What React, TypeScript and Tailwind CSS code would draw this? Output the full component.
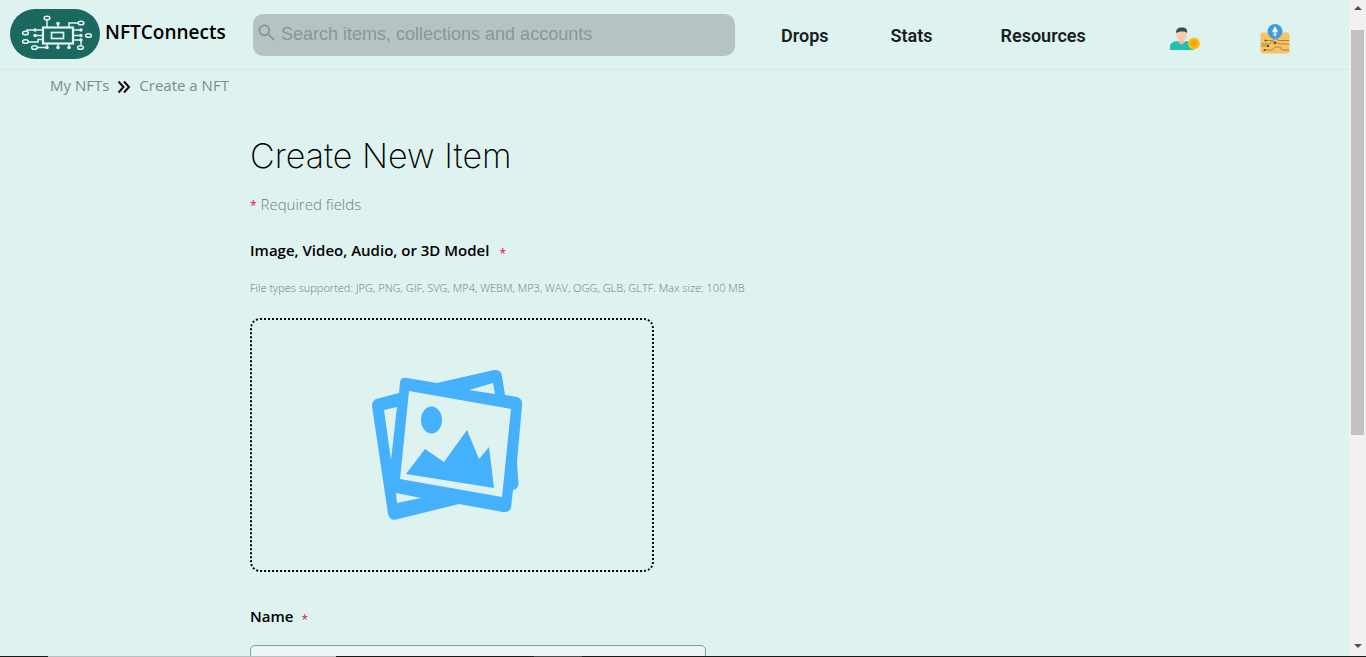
function Logo() {
  return (
    <svg viewBox="0 0 90 50" className="h-[50px] w-[90px] shrink-0" role="img" aria-label="NFTConnects logo">
      <rect width="90" height="50" rx="25" fill="#1b6860" />
      <g fill="none" stroke="#e3f3f1" strokeWidth="1.5">
        <rect x="33" y="18.5" width="30" height="16" strokeWidth="2.2" />
        <rect x="41.500" y="23.500" width="12" height="6" strokeWidth="1.700" />
        <path d="M37 18V11M48 18V15M59 18V14H68M33 21H17V22.500M33 26.500H25M33 30.500H28V33H18M37 35V38.500H27M48 35V39M59 35V39M63 21H71M63 26.500H71M63 31H71V36" />
        <ellipse cx="37" cy="9" rx="2.900" ry="1.800" />
        <ellipse cx="71" cy="14" rx="2.900" ry="1.800" />
        <ellipse cx="15.5" cy="24" rx="2.900" ry="1.800" />
        <ellipse cx="15.5" cy="32.5" rx="2.900" ry="1.800" />
        <ellipse cx="24.5" cy="38.5" rx="2.900" ry="1.800" />
        <ellipse cx="70.500" cy="38.500" rx="2.900" ry="1.800" />
        <ellipse cx="78.500" cy="26.500" rx="2.900" ry="1.800" />
      </g>
      <g fill="#e3f3f1">
        <circle cx="25" cy="21" r="1.700" /><circle cx="25" cy="26.500" r="1.700" />
        <circle cx="48" cy="14.500" r="1.800" /><circle cx="37" cy="38.500" r="1.800" />
        <circle cx="48" cy="38.5" r="1.800" /><circle cx="59" cy="38.5" r="1.800" />
        <circle cx="71" cy="21" r="1.700" /><circle cx="71" cy="26.5" r="1.700" /><circle cx="71" cy="31" r="1.700" />
      </g>
    </svg>
  );
}

function AccountIcon() {
  return (
    <svg viewBox="0 0 30 24" className="h-6 w-[30px]" aria-hidden="true">
      <path d="M0 23v-3c0-4 3-5.500 8-6l4 3 4-3c5 .5 7.500 2 7.500 6v3z" fill="#1fc1b3" />
      <path d="M8.500 11h6v4.500l-3 2.500-3-2.500z" fill="#f5b59c" />
      <ellipse cx="11.700" cy="8" rx="5.300" ry="6.500" fill="#ffc7ae" />
      <path d="M6 6C6 2 8 .500 12 .500S17.300 2 17.300 6C14 3.500 9 4.500 6 6z" fill="#414b58" />
      <circle cx="24" cy="16.500" r="6" fill="#fcc419" />
      <circle cx="24" cy="16.500" r="4.200" fill="#f5ad0a" />
      <path d="M24 14v5M22.500 16.500h3" stroke="#d99200" fill="none" />
    </svg>
  );
}

function WalletIcon() {
  return (
    <svg viewBox="0 0 30 30" className="h-[30px] w-[30px]" aria-hidden="true">
      <rect x=".5" y="8.500" width="29" height="21" rx="2.500" fill="#f8c463" />
      <path d="M5 16.500h8l2-2 4 2h10M1 20h8l3-2h4l3 2h10M1 22h6M4 26h8l3-3h5l2 3h7" stroke="#a98447" fill="none" />
      <g fill="#5c5038"><circle cx="5.500" cy="16.500" r="1" /><circle cx="15" cy="19" r="1.300" /><circle cx="4.500" cy="26" r="1" /><circle cx="8" cy="22" r="1.200" /></g>
      <circle cx="15" cy="7.500" r="7.400" fill="#3f9bdf" />
      <path d="m15 2 3 5.500-3 5.500-3-5.500z" fill="#e8f3fa" />
      <path d="m12 8 3 1.500L18 8" stroke="#3f9bdf" fill="none" />
    </svg>
  );
}

function PicturesIcon() {
  return (
    <svg viewBox="2 2 180 170" className="h-[170px] w-[180px]" aria-hidden="true">
      <g transform="translate(0 2)">
        <path fill="#45b1fd" fillRule="evenodd" d="M16 39 39 33 40 22Q41 17 47 18L77 23 134 10Q141 9 142 16L145 35 157 37Q163 39 162 46L157 102 158.500 124Q158 129 153 130L151 148Q149 153 143 152L99 144 36 159.500Q30 161 28 154L12 46Q12 41 16 39zM24 50 37 47 31 100zM109 30 133 23 135 34zM36 133 61 138 37 143zM49 31 151 49 142 137 40 119z" />
        <path fill="#45b1fd" d="M154 100 158 124Q157 129 151 130zM46 114 65 89 84 102 107 70 119 99 129 87 134 128z" />
        <ellipse cx="71.500" cy="60" rx="10.500" ry="13.500" fill="#45b1fd" />
      </g>
    </svg>
  );
}

function Required() {
  return <span className="text-xs leading-none font-normal text-[#dc143c]">*</span>;
}

export default function App() {
  return (
    <div className="flex h-screen flex-col overflow-hidden bg-[#def2f0] font-['Open_Sans','Noto_Sans',sans-serif]">
      <div className="flex min-h-0 flex-1">
        <div className="min-w-0 flex-1 overflow-hidden">
          <header className="flex h-[70px] items-start border-b border-[#d5e9ec] pl-[10px]">
            <a href="#home" className="flex w-[219px] shrink-0 items-start gap-[5px] pt-[9px] text-black">
              <Logo />
              <span className="mt-[9px] text-[19px] leading-7 font-semibold">NFTConnects</span>
            </a>
            <form role="search" className="ml-6 mt-[14px] flex h-[42px] w-[482px] items-center gap-[5px] rounded-[10px] bg-[#b6c3c3] pl-[5px]">
              <svg viewBox="0 0 20 20" className="-mt-1 h-[18px] w-[18px] shrink-0" fill="none" stroke="#879493" strokeWidth="2" aria-hidden="true">
                <circle cx="7" cy="7" r="5.500" /><path d="m11 11 7 7" />
              </svg>
              <input aria-label="Search" placeholder="Search items, collections and accounts" className="min-w-0 flex-1 bg-transparent pb-[3px] font-['Liberation_Sans',sans-serif] text-lg outline-none placeholder:text-[#899796]" />
            </form>
            <nav aria-label="Main" className="ml-[46px] flex pt-[22px] font-['Roboto',sans-serif] text-lg leading-7 font-semibold text-[#16201f]">
              <a href="#drops">Drops</a>
              <a href="#stats" className="ml-[62px]">Stats</a>
              <a href="#resources" className="ml-[68px]">Resources</a>
            </nav>
            <button aria-label="Account" className="ml-[84px] mt-[27px]"><AccountIcon /></button>
            <button aria-label="Wallet" className="ml-[60px] mt-6"><WalletIcon /></button>
          </header>

          <nav aria-label="Breadcrumb" className="flex h-[30px] items-center gap-2 pl-[50px] text-[15px] text-[#7f8b8b]">
            <a href="#nfts">My NFTs</a>
            <svg viewBox="0 0 14 14" className="mt-1 h-[14px] w-[14px]" fill="none" stroke="#111" strokeWidth="2" aria-hidden="true">
              <path d="m1.500 1.500 5 5.500-5 5.500M7 1.500l5 5.500-5 5.500" />
            </svg>
            <a href="#create">Create a NFT</a>
          </nav>

          <main className="pl-[250px]">
            <h1 className="mt-[34px] font-['Inter',sans-serif] text-[34px] leading-[44px] font-extralight">Create New Item</h1>
            <p className="mt-[14px] text-[15px] leading-6 font-light text-[#717d7d]"><Required /> Required fields</p>
            <label htmlFor="media" className="mt-[22px] flex w-fit items-center gap-[10px] text-[15px] leading-6 font-semibold">
              Image, Video, Audio, or 3D Model
              <span className="flex pt-2"><Required /></span>
            </label>
            <p className="mt-4 text-[11px] leading-5 font-light text-[#717d7d]">
              File types supported: JPG, PNG, GIF, SVG, MP4, WEBM, MP3, WAV, OGG, GLB, GLTF. Max size: 100 MB
            </p>
            <label htmlFor="media" className="mt-5 flex h-[254px] w-[404px] cursor-pointer items-center justify-center rounded-[10px] border-2 border-dotted border-black">
              <PicturesIcon />
              <input id="media" type="file" className="sr-only" />
            </label>
            <label htmlFor="name" className="mt-8 flex w-fit items-center gap-2 text-[15px] leading-6 font-semibold">
              Name
              <span className="flex pt-2"><Required /></span>
            </label>
            <input id="name" className="mt-[17px] block h-10 w-[456px] rounded-[5px] border border-[#8c9a9b] bg-[#eaf5f7] px-3" />
          </main>
        </div>

        <div aria-hidden="true" className="flex w-[17px] shrink-0 flex-col items-center bg-[#f1f1f1]">
          <div className="flex h-[30px] items-start pt-[6px]">
            <svg viewBox="0 0 8 4" className="h-1 w-2"><path d="M0 4h8L4 0z" fill="#505050" /></svg>
          </div>
          <div className="h-[405px] w-[13px] bg-[#c1c1c1]" />
          <svg viewBox="0 0 8 4" className="mt-auto mb-2 h-1 w-2"><path d="M0 0h8L4 4z" fill="#505050" /></svg>
        </div>
      </div>
      <div aria-hidden="true" className="flex h-px shrink-0 bg-[#171b1b]">
        <div className="ml-12 w-72 bg-[#b8c1c1]" />
        <div className="ml-[198px] w-12 bg-[#454b4b]" />
      </div>
    </div>
  );
}
